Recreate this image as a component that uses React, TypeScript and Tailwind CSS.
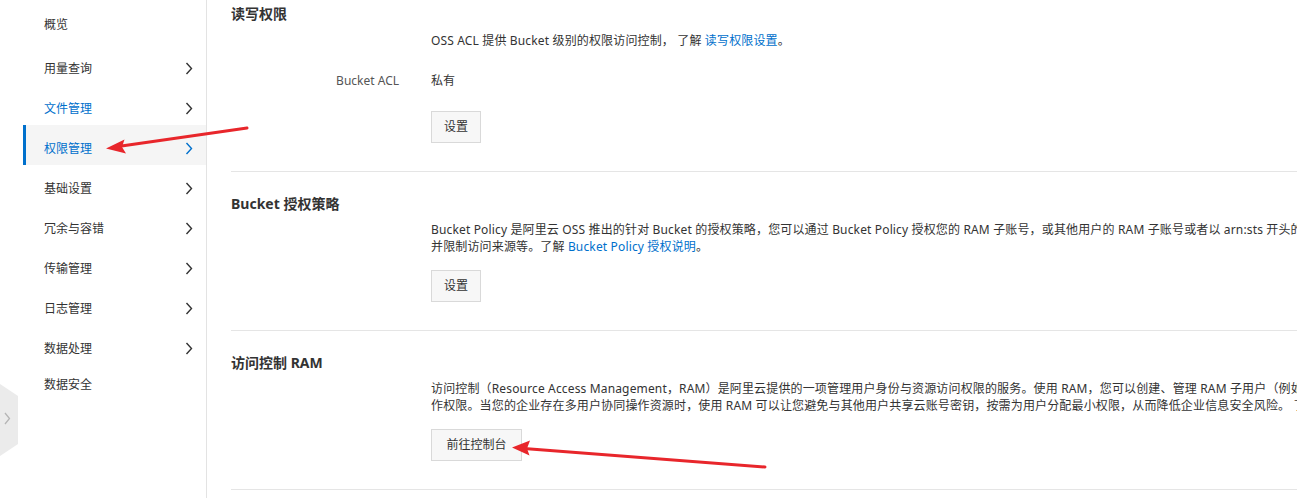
import React from 'react';

const font = { fontFamily: '"Noto Sans", "Noto Sans CJK SC", sans-serif' };

const menu = [
  { label: '概览', arrow: false },
  { label: '用量查询', arrow: true },
  { label: '文件管理', arrow: true, blue: true },
  { label: '权限管理', arrow: true, blue: true, active: true },
  { label: '基础设置', arrow: true },
  { label: '冗余与容错', arrow: true },
  { label: '传输管理', arrow: true },
  { label: '日志管理', arrow: true },
  { label: '数据处理', arrow: true },
  { label: '数据安全', arrow: false },
];

const Chevron = ({ color }: { color: string }) => (
  <svg width="8" height="13" viewBox="0 0 8 13" fill="none">
    <path d="M1.5 1l5 5.5-5 5.5" stroke={color} strokeWidth="1.4" />
  </svg>
);

const Btn = ({ children, w }: { children: React.ReactNode; w: string }) => (
  <button className={`${w} h-[32px] border border-[#d9d9d9] bg-[#f7f7f7] text-[12px] text-[#333]`}>
    {children}
  </button>
);

const Sidebar = () => (
  <aside className="w-[207px] shrink-0 border-r border-[#e3e3e3] pl-[23px] pt-[5px] relative">
    {menu.map((m) => (
      <div
        key={m.label}
        className={`h-[40px] flex items-center justify-between pr-[13px] text-[12px] ${
          m.arrow ? 'pt-[7px]' : ''
        } ${m.active ? 'bg-[#f5f5f5] border-l-[3px] border-[#0070cc] pl-[18px]' : 'pl-[21px]'} ${
          m.blue ? 'text-[#0070cc]' : 'text-[#333]'
        }`}
      >
        <span>{m.label}</span>
        {m.arrow && <Chevron color={m.active ? '#0070cc' : '#333'} />}
      </div>
    ))}
  </aside>
);

const App = () => {
  return (
    <div className="w-[1297px] h-[498px] overflow-hidden relative bg-white flex" style={font}>
      <Sidebar />

      {/* collapse toggle */}
      <div className="absolute left-0 top-[384px]">
        <svg width="19" height="72" viewBox="0 0 19 72">
          <path d="M0 0L18 12V60L0 72Z" fill="#ebebeb" />
          <path d="M5 29l4.5 5.5L5 40" stroke="#b5b5b5" strokeWidth="1.3" fill="none" />
        </svg>
      </div>

      <main className="flex-1 min-w-0 overflow-hidden pl-[24px] text-[#333]">
        {/* 读写权限 */}
        <section className="border-b border-[#e5e5e5] pt-[4px] pb-[28px]">
          <h3 className="text-[14px] font-bold leading-[20px]">读写权限</h3>
          <div className="mt-[8px] pl-[200px] text-[12px] leading-[17px] whitespace-nowrap tracking-[0.15px]">
            OSS ACL 提供 Bucket 级别的权限访问控制， 了解 <span className="text-[#0070cc]">读写权限设置</span>。
          </div>
          <div className="mt-[23px] flex text-[12px] leading-[17px]">
            <div className="w-[200px] pr-[32px] text-right text-[#555]">Bucket ACL</div>
            <div>私有</div>
          </div>
          <div className="mt-[22px] pl-[200px]">
            <Btn w="w-[50px]">设置</Btn>
          </div>
        </section>

        {/* Bucket 授权策略 */}
        <section className="border-b border-[#e5e5e5] pt-[22px] pb-[28px]">
          <h3 className="text-[14px] font-bold leading-[20px]">Bucket 授权策略</h3>
          <div className="mt-[7px] pl-[200px] text-[12px] leading-[17px] whitespace-nowrap tracking-[0.15px]">
            <div>
              Bucket Policy 是阿里云 OSS 推出的针对 Bucket 的授权策略，您可以通过 Bucket Policy 授权您的 RAM 子账号，或其他用户的 RAM 子账号或者以 arn:sts 开头的临时访问凭证访问您的 Bucket 资源，
            </div>
            <div>
              并限制访问来源等。了解 <span className="text-[#0070cc]">Bucket Policy 授权说明</span>。
            </div>
          </div>
          <div className="mt-[15px] pl-[200px]">
            <Btn w="w-[50px]">设置</Btn>
          </div>
        </section>

        {/* 访问控制 RAM */}
        <section className="border-b border-[#e5e5e5] pt-[22px] pb-[28px]">
          <h3 className="text-[14px] font-bold leading-[20px]">访问控制 RAM</h3>
          <div className="mt-[7px] pl-[200px] text-[12px] leading-[17px] whitespace-nowrap tracking-[0.15px]">
            <div>
              访问控制（Resource Access Management，RAM）是阿里云提供的一项管理用户身份与资源访问权限的服务。使用 RAM，您可以创建、管理 RAM 子用户（例如员工、系统或应用程序），并可以控制这些 RAM 子用户对资源的操
            </div>
            <div>
              作权限。当您的企业存在多用户协同操作资源时，使用 RAM 可以让您避免与其他用户共享云账号密钥，按需为用户分配最小权限，从而降低企业信息安全风险。 了解 <span className="text-[#0070cc]">访问控制</span>。
            </div>
          </div>
          <div className="mt-[15px] pl-[200px]">
            <Btn w="w-[91px]">前往控制台</Btn>
          </div>
        </section>
      </main>

      {/* annotation arrows */}
      <svg className="absolute inset-0 pointer-events-none" width="1297" height="498">
        <line x1="247" y1="128" x2="118" y2="146.5" stroke="#e8262b" strokeWidth="3" strokeLinecap="round" />
        <path d="M106 148.5L124.5 139.5L122 147L126 153.5Z" fill="#e8262b" />
        <line x1="765" y1="467" x2="524" y2="448.5" stroke="#e8262b" strokeWidth="3" strokeLinecap="round" />
        <path d="M512 447.5L530 440.5L527 448.5L529.5 455.5Z" fill="#e8262b" />
      </svg>
    </div>
  );
};

export default App;
